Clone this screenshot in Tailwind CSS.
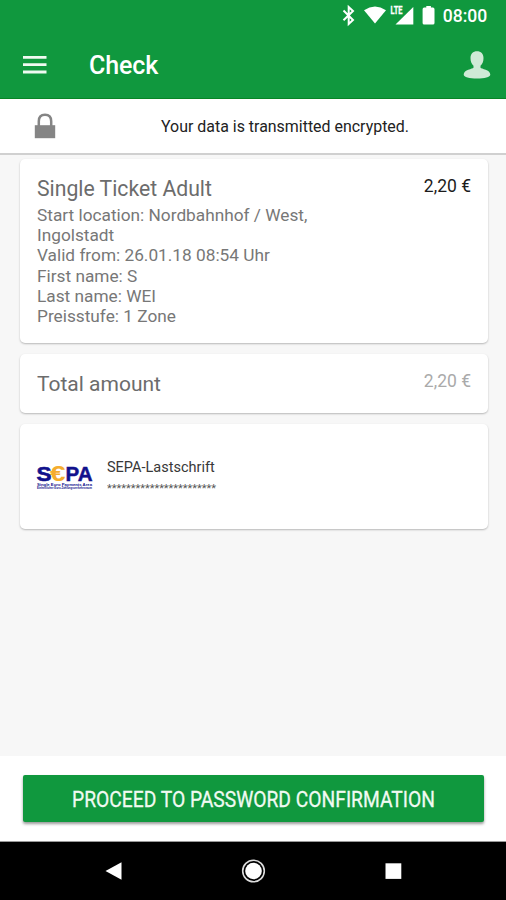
<!DOCTYPE html>
<html lang="en">
<head>
<meta charset="utf-8">
<title>Check</title>
<script src="https://cdn.jsdelivr.net/npm/@tailwindcss/browser@4"></script>
</head>
<body class="w-[506px] h-[900px] overflow-hidden bg-[#f7f7f7] font-['Roboto',sans-serif] flex flex-col">
  <header class="h-[99px] shrink-0 bg-[#10983e] border-b border-[#078525] text-white flex flex-col">
    <div class="h-8 flex items-center justify-end pr-[18px]">
      <svg class="w-[148px] h-8 shrink-0" viewBox="340 0 148 32" fill="#fff">
        <path d="M343.500 10.500 353 20l-4.300 4V7l4.300 4-9.500 9.200" fill="none" stroke="#fff" stroke-width="2"/>
        <path d="M364 10.200Q375 2.800 386 10.200L375 23.500Z"/>
        <path d="M413.300 7V24.500H395.500Z"/>
        <path d="M390 5h13v10h-13z" fill="#10983e"/>
        <text x="390.500" y="14.300" font-size="10" font-weight="700" textLength="12" lengthAdjust="spacingAndGlyphs" stroke="#fff" stroke-width=".3">LTE</text>
        <path d="M426.300 6h4.600v1.600h2q1.600 0 1.600 1.600v13.700q0 1.600-1.600 1.600h-8.700q-1.600 0-1.600-1.600V9.200q0-1.600 1.600-1.600h2.100z"/>
        <text x="442.800" y="22.300" font-size="17.500" font-weight="500" textLength="44.500" lengthAdjust="spacingAndGlyphs">08:00</text>
      </svg>
    </div>
    <div class="h-[66px] flex items-center pl-[23px] pr-[15px]">
      <svg class="w-6 h-[18px] shrink-0" viewBox="0 0 24 18" fill="#effaf1"><path d="M0 0h23.500v2.800H0zM0 7.300h23.500v2.800H0zM0 14.600h23.500v2.800H0z"/></svg>
      <h1 class="ml-[42px] mt-[2px] text-[25px] leading-8 font-medium tracking-[-0.1px] grow">Check</h1>
      <svg class="w-7 h-7 shrink-0" viewBox="0 0 28 28" fill="#cfead6"><path d="M14 .3c4 0 6.500 2.600 6.500 6.700 0 3.400-1 6-3 7.700v2.100c.7 1.100 9.800 2.100 9.800 6.700 0 2.900-5.800 4-13.300 4S.7 26.400.7 23.500c0-4.600 9.100-5.600 9.800-6.700v-2.100c-2-1.700-3-4.300-3-7.700C7.500 2.900 10 .3 14 .3z"/></svg>
    </div>
  </header>
  <div class="h-14 shrink-0 bg-white border-b-2 border-[#d0d0d0] flex items-center pl-[34px]">
    <svg class="w-[22px] h-[26px] shrink-0" viewBox="0 0 22 26"><path d="M4.800 13V8.200C4.800 4 7.200 1.700 11 1.700S17.200 4 17.200 8.200V13" fill="none" stroke="#858585" stroke-width="2.500"/><path d="M.8 12.200h20.400v13H.8z" fill="#858585"/></svg>
    <p class="ml-[105px] mt-[2px] text-[15.950px] leading-5 whitespace-nowrap text-[#222]">Your data is transmitted encrypted.</p>
  </div>
  <main class="grow pl-5 pr-[18px] pt-1 flex flex-col gap-[11px]">
    <section class="h-[184px] bg-white rounded-[5px] shadow-[0_1px_2px_rgba(0,0,0,0.26)] px-[17px] pt-[16px] flex justify-between">
      <div class="text-[#777]">
        <h2 class="text-[21.200px] leading-7 text-[#6c6c6c] whitespace-nowrap">Single Ticket Adult</h2>
        <p class="mt-[2px] text-[17.250px] leading-[20.200px] whitespace-nowrap">Start location: Nordbahnhof / West,<br>Ingolstadt<br>Valid from: 26.01.18 08:54 Uhr<br>First name: S<br>Last name: WEI<br>Preisstufe: 1 Zone</p>
      </div>
      <span class="-mt-px text-[17.500px] leading-6 text-[#1c1c1c] whitespace-nowrap">2,20 €</span>
    </section>
    <section class="h-[59px] bg-white rounded-[5px] shadow-[0_1px_2px_rgba(0,0,0,0.26)] px-[17px] pt-4 flex justify-between">
      <h2 class="text-[21px] leading-7 text-[#6c6c6c]">Total amount</h2>
      <span class="-mt-px text-[17.500px] leading-6 text-[#aaa] whitespace-nowrap">2,20 €</span>
    </section>
    <section class="h-[105px] bg-white rounded-[5px] shadow-[0_1px_2px_rgba(0,0,0,0.26)] px-[17px] flex">
      <svg class="mt-[40px] w-14 h-7 shrink-0 overflow-visible" viewBox="0 0 56 28" font-family="Liberation Sans, Arial, sans-serif" font-weight="700" fill="#11118c">
        <text x="-.5" y="17" font-size="20" textLength="15" lengthAdjust="spacingAndGlyphs" stroke="#11118c" stroke-width=".6">S</text>
        <text x="28.500" y="17" font-size="20" textLength="27" lengthAdjust="spacingAndGlyphs" stroke="#11118c" stroke-width=".5">PA</text>
        <text x="13" y="17.300" font-size="21.500" textLength="15.500" lengthAdjust="spacingAndGlyphs" fill="#f5ad2e">€</text>
        <text x="0" y="21.500" font-size="3.700" textLength="55" lengthAdjust="spacingAndGlyphs">Single Euro Payments Area</text>
        <text x="0" y="25.200" font-size="2.800" textLength="55" lengthAdjust="spacingAndGlyphs">Einheitlicher Euro-Zahlungsverkehrsraum</text>
      </svg>
      <div class="ml-[14px] pt-[34px] text-[#383838]">
        <p class="text-[14.500px] leading-5 whitespace-nowrap">SEPA-Lastschrift</p>
        <svg class="w-[112px] h-5 block" viewBox="0 0 112 20" fill="#555"><text x="0" y="13.800" font-size="10.500" textLength="109" lengthAdjust="spacingAndGlyphs">***********************</text></svg>
      </div>
    </section>
  </main>
  <footer class="h-[86px] shrink-0 bg-white border-b border-[#999] pt-[19px] pl-[23px]">
    <button class="w-[461px] h-[47px] rounded-[2px] bg-[#10983e] shadow-[0_2px_3px_rgba(0,0,0,0.4)] flex items-center justify-center">
      <svg class="w-[366px] h-8 overflow-visible" viewBox="0 0 366 32" fill="#f0faf2"><text x="1" y="24" font-size="22.500" textLength="363" lengthAdjust="spacingAndGlyphs" stroke="#f0faf2" stroke-width=".3">PROCEED TO PASSWORD CONFIRMATION</text></svg>
    </button>
  </footer>
  <nav class="h-[58px] shrink-0 bg-black">
    <svg class="w-full h-full" viewBox="0 0 506 58" fill="#fff"><path d="M105.500 29 121.500 20.300v17.400z"/><circle cx="253.500" cy="29" r="8.300"/><circle cx="253.500" cy="29" r="10.800" fill="none" stroke="#ddd" stroke-width="1.600"/><path d="M385.500 21.300h15.800v15.600h-15.800z"/></svg>
  </nav>
</body>
</html>
